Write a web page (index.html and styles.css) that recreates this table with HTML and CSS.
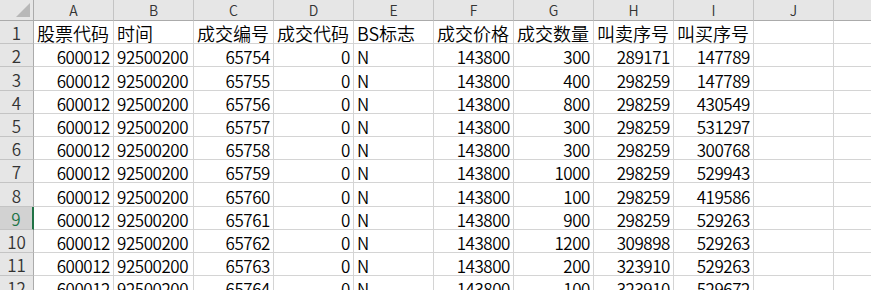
FILE: index.html
```html
<!DOCTYPE html>
<html lang="zh-CN">
<head>
<meta charset="utf-8">
<title>Sheet</title>
<link rel="stylesheet" href="styles.css">
</head>
<body>
<div class="sheet">
  <div class="hd corner"><svg class="tri" width="16" height="16" viewBox="0 0 16 16"><polygon points="1,15 15,15 15,1" fill="#b8b8b8"/></svg></div>
  <div class="hd col">A</div><div class="hd col">B</div><div class="hd col">C</div><div class="hd col">D</div><div class="hd col">E</div><div class="hd col">F</div><div class="hd col">G</div><div class="hd col">H</div><div class="hd col">I</div><div class="hd col">J</div><div class="hd col k"><span class="mark"></span></div>

  <div class="hd rn">1</div><div class="c t cj">股票代码</div><div class="c t cj">时间</div><div class="c t cj">成交编号</div><div class="c t cj">成交代码</div><div class="c t cj">BS标志</div><div class="c t cj">成交价格</div><div class="c t cj">成交数量</div><div class="c t cj">叫卖序号</div><div class="c t cj">叫买序号</div><div class="c"></div><div class="c"></div>

  <div class="hd rn">2</div><div class="c n">600012</div><div class="c t">92500200</div><div class="c n">65754</div><div class="c n">0</div><div class="c t">N</div><div class="c n">143800</div><div class="c n">300</div><div class="c n">289171</div><div class="c n">147789</div><div class="c"></div><div class="c"></div>

  <div class="hd rn">3</div><div class="c n">600012</div><div class="c t">92500200</div><div class="c n">65755</div><div class="c n">0</div><div class="c t">N</div><div class="c n">143800</div><div class="c n">400</div><div class="c n">298259</div><div class="c n">147789</div><div class="c"></div><div class="c"></div>

  <div class="hd rn">4</div><div class="c n">600012</div><div class="c t">92500200</div><div class="c n">65756</div><div class="c n">0</div><div class="c t">N</div><div class="c n">143800</div><div class="c n">800</div><div class="c n">298259</div><div class="c n">430549</div><div class="c"></div><div class="c"></div>

  <div class="hd rn">5</div><div class="c n">600012</div><div class="c t">92500200</div><div class="c n">65757</div><div class="c n">0</div><div class="c t">N</div><div class="c n">143800</div><div class="c n">300</div><div class="c n">298259</div><div class="c n">531297</div><div class="c"></div><div class="c"></div>

  <div class="hd rn">6</div><div class="c n">600012</div><div class="c t">92500200</div><div class="c n">65758</div><div class="c n">0</div><div class="c t">N</div><div class="c n">143800</div><div class="c n">300</div><div class="c n">298259</div><div class="c n">300768</div><div class="c"></div><div class="c"></div>

  <div class="hd rn">7</div><div class="c n">600012</div><div class="c t">92500200</div><div class="c n">65759</div><div class="c n">0</div><div class="c t">N</div><div class="c n">143800</div><div class="c n">1000</div><div class="c n">298259</div><div class="c n">529943</div><div class="c"></div><div class="c"></div>

  <div class="hd rn">8</div><div class="c n">600012</div><div class="c t">92500200</div><div class="c n">65760</div><div class="c n">0</div><div class="c t">N</div><div class="c n">143800</div><div class="c n">100</div><div class="c n">298259</div><div class="c n">419586</div><div class="c"></div><div class="c"></div>

  <div class="hd rn active">9</div><div class="c n">600012</div><div class="c t">92500200</div><div class="c n">65761</div><div class="c n">0</div><div class="c t">N</div><div class="c n">143800</div><div class="c n">900</div><div class="c n">298259</div><div class="c n">529263</div><div class="c"></div><div class="c"></div>

  <div class="hd rn">10</div><div class="c n">600012</div><div class="c t">92500200</div><div class="c n">65762</div><div class="c n">0</div><div class="c t">N</div><div class="c n">143800</div><div class="c n">1200</div><div class="c n">309898</div><div class="c n">529263</div><div class="c"></div><div class="c"></div>

  <div class="hd rn">11</div><div class="c n">600012</div><div class="c t">92500200</div><div class="c n">65763</div><div class="c n">0</div><div class="c t">N</div><div class="c n">143800</div><div class="c n">200</div><div class="c n">323910</div><div class="c n">529263</div><div class="c"></div><div class="c"></div>

  <div class="hd rn">12</div><div class="c n">600012</div><div class="c t">92500200</div><div class="c n">65764</div><div class="c n">0</div><div class="c t">N</div><div class="c n">143800</div><div class="c n">100</div><div class="c n">323910</div><div class="c n">529672</div><div class="c"></div><div class="c"></div>
</div>
</body>
</html>
```
FILE: styles.css
```css
* { box-sizing: border-box; }
html, body { margin: 0; padding: 0; background: #fff; overflow: hidden; }
body { width: 871px; height: 290px; }
.sheet {
  display: grid;
  grid-template-columns: 34px repeat(11, 80px);
  grid-template-rows: 21px repeat(12, 23.2px);
  font-family: "Noto Sans CJK SC", "Noto Sans", sans-serif;
  font-weight: 350;
  color: #000;
}
.hd {
  background: #e6e6e6;
  color: #333;
  border-right: 1px solid #c4c4c4;
  border-bottom: 1px solid #c4c4c4;
  display: flex;
  align-items: flex-end;
  justify-content: center;
  line-height: 1;
}
.col { font-size: 14px; padding-bottom: 3px; border-bottom-color: #ababab; }
.corner { justify-content: flex-end; padding: 0 2px 2px 0; border-bottom-color: #ababab; border-right-color: #ababab; }
.tri { display: block; }
.k { position: relative; }
.mark { position: absolute; right: -1px; top: 5px; width: 3px; height: 12px; background: #f0a040; }
.rn { font-size: 17px; padding-bottom: 2px; border-right-color: #ababab; }
.rn.active { background: #d2d2d2; color: #217346; border-right: 2px solid #217346; }
.c {
  border-right: 1px solid #d4d4d4;
  border-bottom: 1px solid #d4d4d4;
  display: flex;
  align-items: flex-end;
  font-size: 17px;
  letter-spacing: -0.45px;
  line-height: 1;
  padding: 0 3px 1px 3px;
  white-space: nowrap;
}
.n { justify-content: flex-end; }
.t { justify-content: flex-start; }
.cj { font-size: 18px; letter-spacing: 0; }
```
